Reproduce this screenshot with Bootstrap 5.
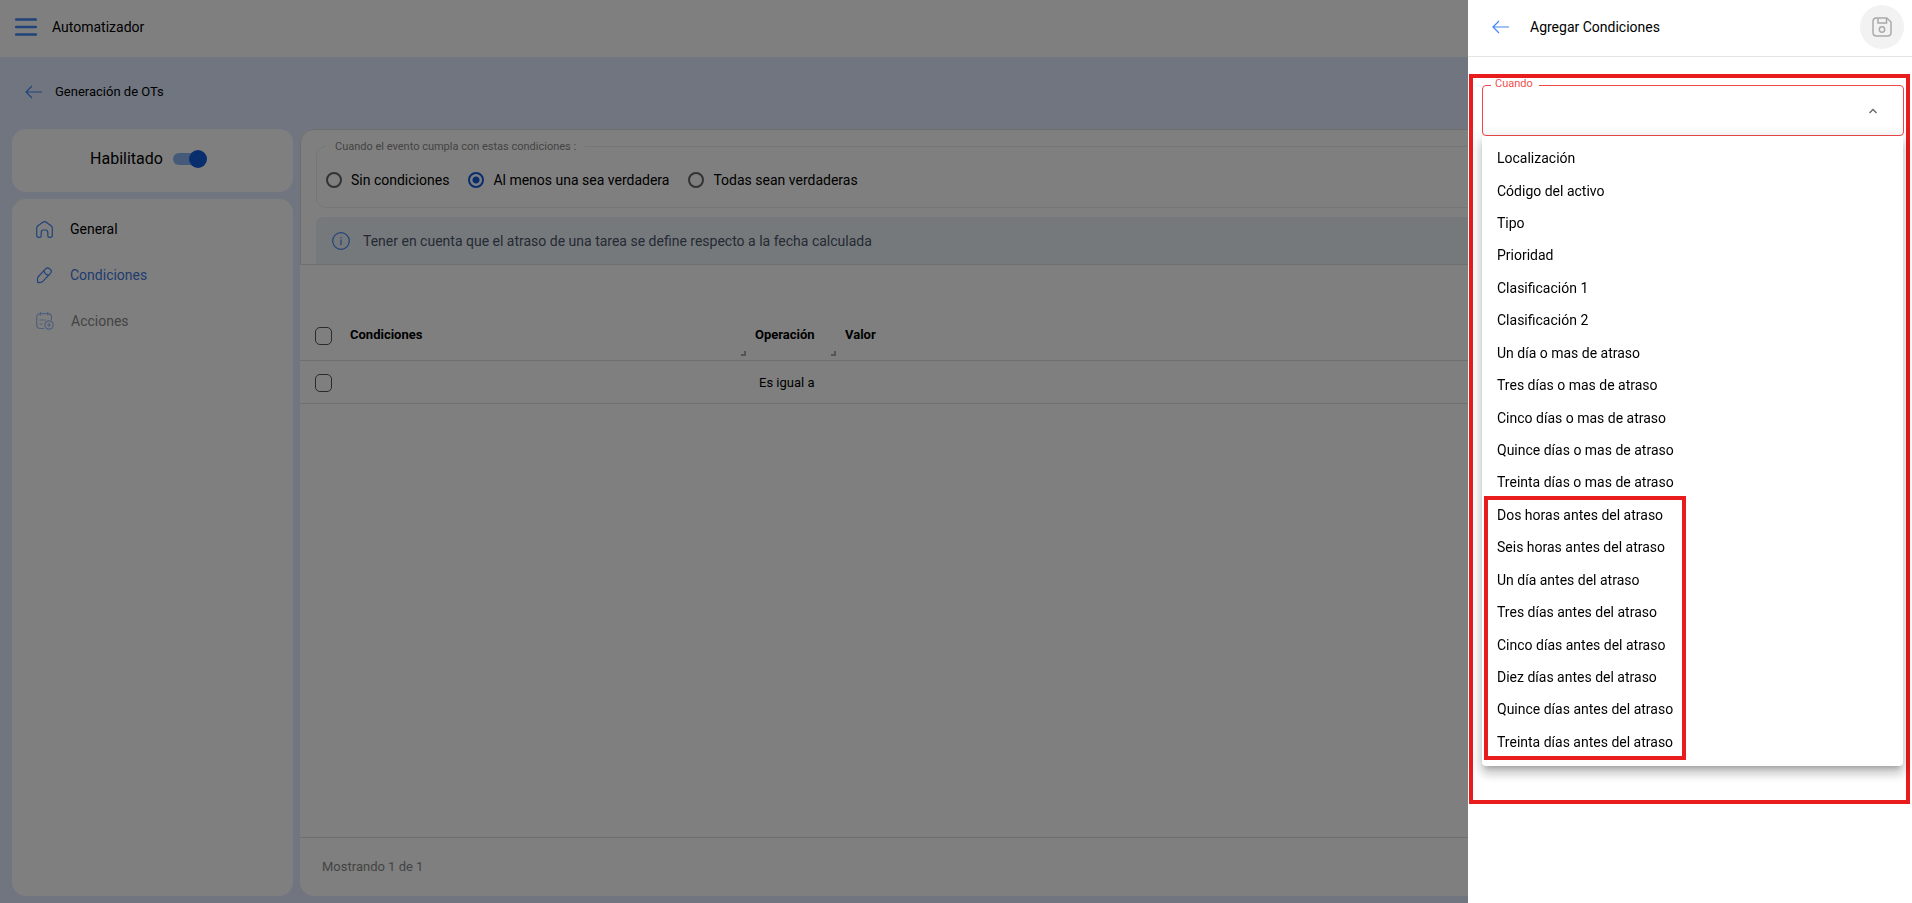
<!DOCTYPE html>
<html lang="es">
<head>
<meta charset="utf-8">
<meta name="viewport" content="width=device-width, initial-scale=1">
<title>Automatizador</title>
<link href="https://cdn.jsdelivr.net/npm/bootstrap@5.3.0/dist/css/bootstrap.min.css" rel="stylesheet">
<style>
  :root { --brand: #4285f4; --brand-strong: #105cdc; --alert-red: #e81c1c; --line: #dcdcdc; }
  body { font-family: Roboto, "Noto Sans", sans-serif; font-size: 14px; line-height: 20px; color: #000; background: #e1eafe; }
  .topbar, .drawer-head { height: 57px; padding-bottom: 3px; }
  .topbar { padding-left: 15px; gap: 15px; }
  .subbar { height: 72px; padding: 0 25px 2px; font-size: 13px; }
  .icon-btn { display: flex; padding: 0; border: 0; background: none; color: var(--brand); }
  .workspace { padding: 0 12px 7px; gap: 7px; }
  .side { width: 281px; gap: 7px; }
  .panel { background: #fff; border-radius: 14px; }
  .enable { height: 63px; padding: 0 8px 3px 0; font-size: 16px; gap: 10px; }
  .toggle { appearance: none; position: relative; width: 34px; height: 18px; margin: 0; }
  .toggle::before { content: ""; position: absolute; inset: 3px 2px 3px 0; border-radius: 6px; background: #8ab2f2; }
  .toggle::after { content: ""; position: absolute; right: 0; top: 0; width: 18px; height: 18px; border-radius: 50%; background: var(--brand-strong); }
  .side-menu { padding: 7px 24px; }
  .side-menu a { display: flex; align-items: center; gap: 17px; height: 46px; color: #000; text-decoration: none; }
  .side-menu a.current { color: #3f78dc; }
  .side-menu a.off { color: #888; }
  .side-menu svg { color: var(--brand); }
  .side-menu .off svg { opacity: .5; }
  .rules { height: 136px; padding: 10px 15px 0; border: 1px solid var(--line); border-radius: 14px 14px 0 0; overflow: hidden; }
  .rules fieldset { position: relative; height: 68px; margin-bottom: 9px; }
  .rules .frame { height: 62px; margin-top: 6px; padding: 6px 9px 0; border: 1px solid #ececec; border-radius: 10px; }
  .rules legend { position: absolute; left: 10px; top: 0; width: auto; margin: 0; padding: 0 9px; font-size: 11px; line-height: 14px; color: #888; background: #fff; }
  .choice { margin-right: 19px; }
  .pick { appearance: none; width: 16px; height: 16px; margin: 0 9px 0 0; border: 2px solid #666; border-radius: 50%; }
  .pick:checked { border-color: var(--brand-strong); background: radial-gradient(var(--brand-strong) 3px, #fff 4px); }
  .notice { height: 60px; padding: 0 16px 13px; gap: 13px; border-radius: 6px; background: #ecf3f9; color: #4a5568; }
  .grid th, .grid td { height: 43px; padding: 0; border-bottom: 1px solid var(--line); position: relative; }
  .grid th { height: 48px; padding-bottom: 2px; font-size: 13px; font-weight: 700; }
  .grid td { padding-top: 2px; font-size: 13px; }
  .grid .grip { position: absolute; right: 9px; bottom: 4px; width: 5px; height: 5px; border: solid #aaa; border-width: 0 2px 2px 0; }
  .tick { appearance: none; display: block; width: 17px; height: 18px; margin: 2px 0 0 15px; border: 1px solid #555; border-radius: 5px; }
  td .tick { margin-top: 0; }
  .toolbar { height: 47px; }
  .foot { height: 59px; padding: 0 22px; border-top: 1px solid var(--line); color: #888; font-size: 13px; }
  .drawer { --bs-offcanvas-width: 444px; color: #000; border: 0 !important; box-shadow: none; }
  .drawer-head { padding: 0 8px 2px 24px; border-bottom: 1px solid #e4e4e4; }
  .save { width: 44px; height: 44px; border-radius: 50%; background: #f2f2f2; color: #aaa; }
  .marked { min-height: 730px; margin: 17px 2px 0 1px; padding: 7px 2px 0 9px; border: 4px solid var(--alert-red); }
  .when { position: relative; }
  .when label { position: absolute; left: 9px; top: -7px; padding: 0 6px 0 4px; font-size: 11px; line-height: 12px; color: #f05050; background: #fff; }
  .when select { width: 100%; height: 51px; border: 1px solid #f04848; border-radius: 4px; background-color: #fff; background-position: right 25px center; background-size: 10px;
    background-image: url("data:image/svg+xml,%3csvg xmlns='http://www.w3.org/2000/svg' viewBox='0 0 10 10'%3e%3cpath d='M1.5 7 5 3.500 8.500 7' fill='none' stroke='%23666' stroke-width='1.300'/%3e%3c/svg%3e"); }
  .options { position: relative; display: flex; flex-direction: column; min-height: 630px; padding: 6px 0 8px; margin-right: 1px; border: 0; border-radius: 0 0 4px 4px; background: #fff; box-shadow: 0 5px 5px -3px #0003, 0 8px 10px 1px #0002, 0 3px 14px 2px #0002; }
  .options .dropdown-item { flex: 1; padding: 0 15px; color: #000; font-size: 14px; line-height: 20px; }
  .ring { position: absolute; left: 2px; bottom: 6px; width: 202px; height: 264px; border: 4px solid var(--alert-red); pointer-events: none; }
</style>
</head>
<body>
<div class="d-flex flex-column vh-100">
  <header class="topbar d-flex align-items-center bg-white">
    <button class="icon-btn" type="button" aria-label="Menú"><svg width="22" height="18" viewBox="0 0 22 18" stroke="currentColor" stroke-width="2.400" stroke-linecap="round"><path d="M1 1.500h20M1 9h20M1 16.500h20"/></svg></button>
    <span>Automatizador</span>
  </header>
  <div class="subbar d-flex align-items-center">
    <button class="icon-btn" type="button" aria-label="Volver"><svg width="18" height="14" viewBox="0 0 18 14" fill="none" stroke="currentColor" stroke-width="1.200"><path d="M17 7H1M7 1 1 7l6 6"/></svg></button>
    <span class="ms-2 ps-1">Generación de OTs</span>
  </div>
  <div class="workspace d-flex flex-grow-1">
    <aside class="side d-flex flex-column flex-shrink-0">
      <div class="panel enable d-flex align-items-center justify-content-center">
        <label for="enabled">Habilitado</label>
        <input class="toggle" type="checkbox" role="switch" id="enabled" checked>
      </div>
      <nav class="panel side-menu flex-grow-1">
        <a href="#"><svg width="17" height="17" viewBox="0 0 17 17" fill="none" stroke="currentColor" stroke-width="1.200"><path d="M.7 7.200q0-1.500 1.200-2.500L6.800 1.200q1.700-1.200 3.400 0l4.900 3.500q1.200 1 1.200 2.500v7q0 2.100-2.100 2.100h-.8q-1.600 0-1.600-1.600v-3.200q0-2.500-2.300-2.500h-2q-2.300 0-2.300 2.500v3.200q0 1.600-1.600 1.600h-.8q-2.100 0-2.100-2.100z"/></svg>General</a>
        <a href="#" class="current"><svg width="17" height="17" viewBox="0 0 17 17" fill="none" stroke="currentColor" stroke-width="1.200"><path d="m2 10 7.800-8.300q1.800-1.700 3.700 0l1 1q1.700 1.700 0 3.600L6.800 14.400Q6 15.200 5 15.300l-2.500.3q-1 0-.9-1L1.500 12q0-1.200.5-2zM8 3.700q.5 3.800 4.500 4.500"/></svg>Condiciones</a>
        <a href="#" class="off"><svg width="18" height="18" viewBox="0 0 18 18" fill="none" stroke="currentColor" stroke-width="1.200"><path d="M8 16.500H4.500q-3.800 0-3.800-3.800V5.500Q.7 1.700 4.500 1.700h7.200q3.800 0 3.800 3.800v2.800M4.500 0v3.500M11.700 0v3.500M3.500 8h6.500M3.500 12h3.200"/><circle cx="13" cy="13" r="4.200"/><path d="M13 11v4M11 13h4"/></svg>Acciones</a>
      </nav>
    </aside>
    <main class="panel flex-grow-1 d-flex flex-column">
      <section class="rules">
        <fieldset>
          <legend>Cuando el evento cumpla con estas condiciones :</legend>
          <div class="frame d-flex align-items-center">
            <input class="pick" type="radio" name="mode" id="m1"><label class="choice" for="m1">Sin condiciones</label>
            <input class="pick" type="radio" name="mode" id="m2" checked><label class="choice" for="m2">Al menos una sea verdadera</label>
            <input class="pick" type="radio" name="mode" id="m3"><label for="m3">Todas sean verdaderas</label>
          </div>
        </fieldset>
        <div class="notice d-flex align-items-center">
          <svg width="18" height="18" viewBox="0 0 18 18" fill="none" stroke="#4285f4" stroke-width="1.200"><circle cx="9" cy="9" r="8.300"/><path d="M9 7.500V13M9 5v1.300"/></svg>
          <span>Tener en cuenta que el atraso de una tarea se define respecto a la fecha calculada</span>
        </div>
      </section>
      <div class="toolbar"></div>
      <table class="grid w-100">
        <colgroup><col width="50"><col width="405"><col width="90"><col></colgroup>
        <thead><tr>
          <th><input class="tick" type="checkbox" aria-label="Seleccionar todo"></th>
          <th>Condiciones<span class="grip"></span></th>
          <th>Operación<span class="grip"></span></th>
          <th>Valor</th>
        </tr></thead>
        <tbody><tr>
          <td><input class="tick" type="checkbox" aria-label="Seleccionar fila"></td>
          <td></td><td class="ps-1">Es igual a</td><td></td>
        </tr></tbody>
      </table>
      <footer class="foot d-flex align-items-center mt-auto">Mostrando 1 de 1</footer>
    </main>
  </div>
</div>

<div class="offcanvas-backdrop show"></div>
<div class="offcanvas offcanvas-end show drawer" tabindex="-1" data-bs-backdrop="false" data-bs-scroll="true" aria-labelledby="drawerTitle">
  <div class="drawer-head d-flex align-items-center flex-shrink-0">
    <button class="icon-btn" type="button" aria-label="Cerrar"><svg width="18" height="14" viewBox="0 0 18 14" fill="none" stroke="currentColor" stroke-width="1.200"><path d="M17 7H1M7 1 1 7l6 6"/></svg></button>
    <span class="ms-3 ps-1" id="drawerTitle">Agregar Condiciones</span>
    <button class="icon-btn save ms-auto align-items-center justify-content-center" type="button" aria-label="Guardar"><svg width="20" height="20" viewBox="0 0 20 20" fill="none" stroke="currentColor" stroke-width="1.500"><path d="M4.500 1h10.300L19 5v10.500q0 3.500-3.500 3.500h-11Q1 19 1 15.500v-11Q1 1 4.500 1zM6 1v5h8.500V1"/><circle cx="10" cy="12.500" r="2.700"/></svg></button>
  </div>
  <div class="marked">
    <div class="when">
      <label for="when">Cuando</label>
      <select class="form-select" id="when"><option value=""></option></select>
    </div>
    <div class="options">
      <button class="dropdown-item" type="button">Localización</button>
      <button class="dropdown-item" type="button">Código del activo</button>
      <button class="dropdown-item" type="button">Tipo</button>
      <button class="dropdown-item" type="button">Prioridad</button>
      <button class="dropdown-item" type="button">Clasificación 1</button>
      <button class="dropdown-item" type="button">Clasificación 2</button>
      <button class="dropdown-item" type="button">Un día o mas de atraso</button>
      <button class="dropdown-item" type="button">Tres días o mas de atraso</button>
      <button class="dropdown-item" type="button">Cinco días o mas de atraso</button>
      <button class="dropdown-item" type="button">Quince días o mas de atraso</button>
      <button class="dropdown-item" type="button">Treinta días o mas de atraso</button>
      <button class="dropdown-item" type="button">Dos horas antes del atraso</button>
      <button class="dropdown-item" type="button">Seis horas antes del atraso</button>
      <button class="dropdown-item" type="button">Un día antes del atraso</button>
      <button class="dropdown-item" type="button">Tres días antes del atraso</button>
      <button class="dropdown-item" type="button">Cinco días antes del atraso</button>
      <button class="dropdown-item" type="button">Diez días antes del atraso</button>
      <button class="dropdown-item" type="button">Quince días antes del atraso</button>
      <button class="dropdown-item" type="button">Treinta días antes del atraso</button>
      <div class="ring"></div>
    </div>
  </div>
</div>
<script src="https://cdn.jsdelivr.net/npm/bootstrap@5.3.0/dist/js/bootstrap.bundle.min.js"></script>
</body>
</html>
